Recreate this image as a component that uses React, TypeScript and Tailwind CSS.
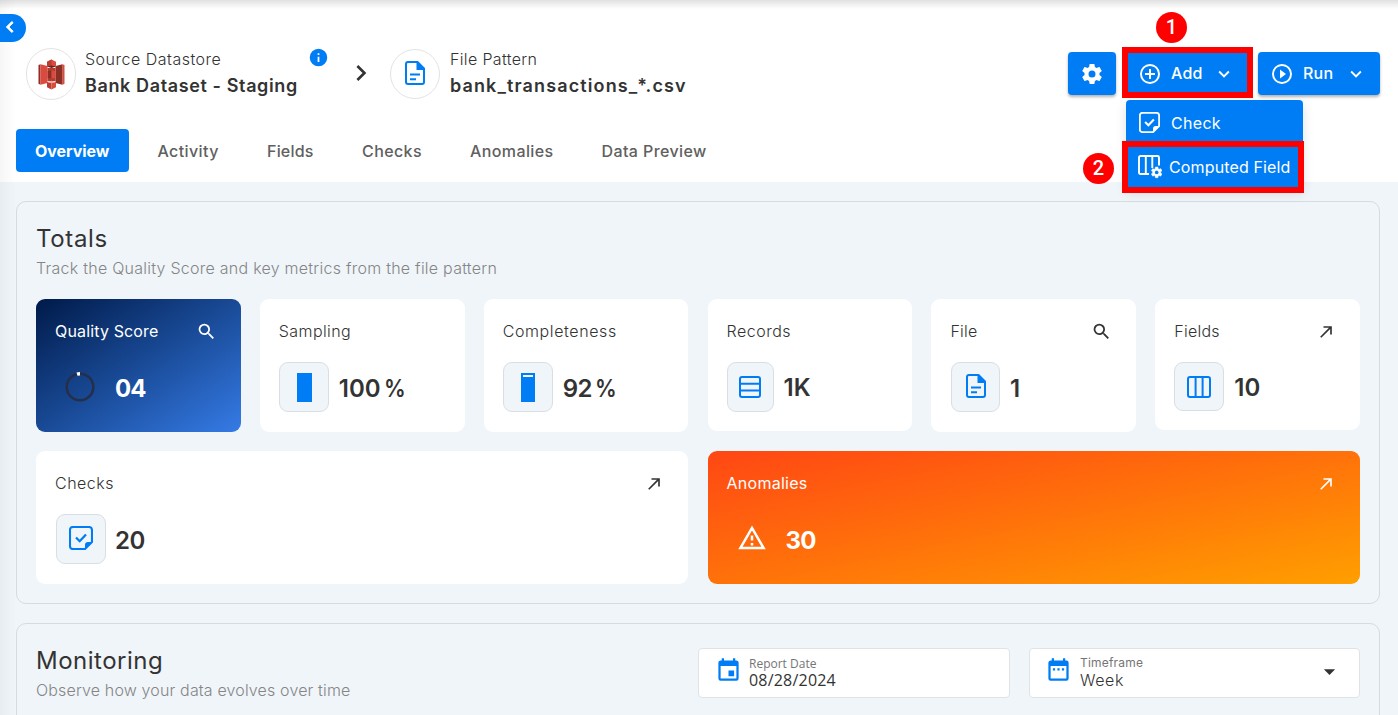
import React from "react";

const paths = {
  search:
    "M9.5,3A6.5,6.5 0 0,1 16,9.5C16,11.11 15.41,12.59 14.44,13.73L14.71,14H15.5L20.5,19L19,20.5L14,15.5V14.71L13.73,14.44C12.59,15.41 11.11,16 9.5,16A6.5,6.5 0 0,1 3,9.5A6.5,6.5 0 0,1 9.5,3M9.5,5C7,5 5,7 5,9.5C5,12 7,14 9.5,14C12,14 14,12 14,9.5C14,7 12,5 9.5,5Z",
  arrow: "M5,17.59L15.59,7H9V5H19V15H17V8.41L6.41,19L5,17.59Z",
  cog: "M12,15.5A3.5,3.5 0 0,1 8.5,12A3.5,3.5 0 0,1 12,8.5A3.5,3.5 0 0,1 15.5,12A3.5,3.5 0 0,1 12,15.5M19.43,12.97C19.47,12.65 19.5,12.33 19.5,12C19.5,11.67 19.47,11.34 19.43,11L21.54,9.37C21.73,9.22 21.78,8.95 21.66,8.73L19.66,5.27C19.54,5.05 19.27,4.96 19.05,5.05L16.56,6.05C16.04,5.66 15.5,5.32 14.87,5.07L14.5,2.42C14.46,2.18 14.25,2 14,2H10C9.75,2 9.54,2.18 9.5,2.42L9.13,5.07C8.5,5.32 7.96,5.66 7.44,6.05L4.95,5.05C4.73,4.96 4.46,5.05 4.34,5.27L2.34,8.73C2.21,8.95 2.27,9.22 2.46,9.37L4.57,11C4.53,11.34 4.5,11.67 4.5,12C4.5,12.33 4.53,12.65 4.57,12.97L2.46,14.63C2.27,14.78 2.21,15.05 2.34,15.27L4.34,18.73C4.46,18.95 4.73,19.03 4.95,18.95L7.44,17.94C7.96,18.34 8.5,18.68 9.13,18.93L9.5,21.58C9.54,21.82 9.75,22 10,22H14C14.25,22 14.46,21.82 14.5,21.58L14.87,18.93C15.5,18.67 16.04,18.34 16.56,17.94L19.05,18.95C19.27,19.03 19.54,18.95 19.66,18.73L21.66,15.27C21.78,15.05 21.73,14.78 21.54,14.63L19.43,12.97Z",
  alert: "M12,2L1,21H23M12,6L19.53,19H4.47M11,10V14H13V10M11,16V18H13V16",
  left: "M15.41,16.58L10.83,12L15.41,7.41L14,6L8,12L14,18L15.41,16.58Z",
  right: "M8.59,16.58L13.17,12L8.59,7.41L10,6L16,12L10,18L8.59,16.58Z",
  down: "M7.41,8.58L12,13.17L16.59,8.58L18,10L12,16L6,10L7.41,8.58Z",
  info: "M13,9H11V7H13M13,17H11V11H13M12,2A10,10 0 1,0 22,12A10,10 0 0,0 12,2Z",
  plus: "M12,20C7.59,20 4,16.41 4,12C4,7.59 7.59,4 12,4C16.41,4 20,7.59 20,12C20,16.41 16.41,20 12,20M12,2A10,10 0 1,0 22,12A10,10 0 0,0 12,2M13,7H11V11H7V13H11V17H13V13H17V11H13V7Z",
  play: "M12,20C7.59,20 4,16.41 4,12C4,7.59 7.59,4 12,4C16.41,4 20,7.59 20,12C20,16.41 16.41,20 12,20M12,2A10,10 0 1,0 22,12A10,10 0 0,0 12,2M10,16.5L16,12L10,7.5V16.5Z",
  calendarDay:
    "M19,19H5V8H19M16,1V3H8V1H6V3H5C3.89,3 3,3.89 3,5V19A2,2 0 0,0 5,21H19A2,2 0 0,0 21,19V5C21,3.89 20.1,3 19,3H18V1M17,12H12V17H17V12Z",
  calendarRange:
    "M9,10H7V12H9V10M13,10H11V12H13V10M17,10H15V12H17V10M19,3H18V1H16V3H8V1H6V3H5C3.89,3 3,3.9 3,5V19A2,2 0 0,0 5,21H19A2,2 0 0,0 21,19V5A2,2 0 0,0 19,3M19,19H5V8H19V19Z",
  caret: "M7,10L12,15L17,10H7Z",
};

function Icon({ name, className }: { name: keyof typeof paths; className: string }) {
  return (
    <svg viewBox="0 0 24 24" className={`shrink-0 fill-current ${className}`}>
      <path fillRule={name === "alert" ? "evenodd" : "nonzero"} d={paths[name]} />
    </svg>
  );
}

function FileIcon({ className }: { className: string }) {
  return (
    <svg viewBox="0 0 20 24" className={`shrink-0 ${className}`} fill="none">
      <path d="M12.5 1H3Q1 1 1 3V21Q1 23 3 23H17Q19 23 19 21V7.5Z" stroke="currentColor" strokeWidth="2" strokeLinejoin="round" />
      <path d="M11.5 1H13L19 7.2V9H11.5Z" fill="currentColor" />
      <path d="M5 13.5H15M5 18.2H11" stroke="currentColor" strokeWidth="2" />
    </svg>
  );
}

function CheckIcon({ className }: { className: string }) {
  return (
    <svg viewBox="0 0 24 24" className={`shrink-0 ${className}`} fill="none">
      <path d="M16 23H4Q1 23 1 20V4Q1 1 4 1H20Q23 1 23 4V16Z" stroke="currentColor" strokeWidth="2.1" strokeLinejoin="round" />
      <path d="M16 23V19Q16 16 19 16H23Z" fill="currentColor" />
      <path d="M7 11.5L10.7 15.2L17 8.5" stroke="currentColor" strokeWidth="2.3" />
    </svg>
  );
}

function RowsIcon() {
  return (
    <svg viewBox="0 0 22 22" className="size-[22px]" fill="none" stroke="#007df5" strokeWidth="2">
      <rect x="1" y="1" width="20" height="20" rx="2" />
      <path d="M1 7.8H21M1 14.4H21" />
    </svg>
  );
}

function ColumnsIcon() {
  return (
    <svg viewBox="0 0 24 22" className="-ml-px h-[22px] w-6" fill="none" stroke="#007df5" strokeWidth="2">
      <rect x="1" y="1" width="22" height="20" rx="2" />
      <path d="M8.6 1V21M15.6 1V21" />
    </svg>
  );
}

function ComputedIcon() {
  return (
    <svg viewBox="0 0 24 24" className="h-6 w-6 shrink-0" fill="none" stroke="white" strokeWidth="1.9">
      <path d="M11 19H2.5Q1 19 1 17.5V2.5Q1 1 2.5 1H19.5Q21 1 21 2.5V10.5M7.8 1V19M14.3 1V13" />
      <g transform="translate(12.2 10.9) scale(.54)">
        <path d={paths.cog} fill="white" stroke="white" strokeWidth=".8" />
        <circle cx="12" cy="12" r="3" fill="#007df5" stroke="none" />
      </g>
    </svg>
  );
}

function StorageLogo() {
  return (
    <svg viewBox="0 0 27 31" className="h-[31px] w-[27px]">
      <path d="M0.5 6L2.5 5.2V25.8L0.5 24.8Z" fill="#8c2f25" />
      <path d="M2.5 5.2L9.5 7V24L2.5 25.8Z" fill="#dc4a3d" />
      <path d="M26.5 6L24.5 5.2V25.8L26.5 24.8Z" fill="#dc4a3d" />
      <path d="M24.5 5.2L17.5 7V24L24.5 25.8Z" fill="#8c2f25" />
      <path d="M9.5 9H17.5V22H9.5Z" fill="#b33b30" />
      <path d="M13.5 0.5L9 2.8V7.6L13.5 8.3L18 7.6V2.8Z" fill="#dc4a3d" />
      <path d="M13.5 0.5L9 2.8V7.6L13.5 6.6Z" fill="#b93e32" />
      <path d="M9 7.6L13.5 6.6L18 7.6L13.5 9Z" fill="#6b2019" />
      <path d="M9.8 12L13.5 11.5V19.5L9.8 19Z" fill="#8c2f25" />
      <path d="M17.2 12L13.5 11.5V19.5L17.2 19Z" fill="#dc4a3d" />
      <path d="M9 23L13.5 21.8L18 23L13.5 24.2Z" fill="#eda79f" />
      <path d="M9 23L13.5 24.2V30.5L9 28.2Z" fill="#b93e32" />
      <path d="M18 23L13.5 24.2V30.5L18 28.2Z" fill="#dc4a3d" />
    </svg>
  );
}

function Tile({ className, children }: { className: string; children: React.ReactNode }) {
  return (
    <div className={`flex shrink-0 items-center justify-center rounded-[9px] border border-[#d9dee4] bg-[#f0f5fa] text-[#007df5] ${className}`}>
      {children}
    </div>
  );
}

type CardProps = {
  title: string;
  titleClass?: string;
  className: string;
  action?: "search" | "arrow";
  children: React.ReactNode;
};

function Card({ title, titleClass = "", className, action, children }: CardProps) {
  return (
    <div className={`rounded-[9px] px-[19px] pt-[19px] ${className}`}>
      <div className="flex h-[26px] items-center justify-between">
        <span className={`whitespace-nowrap text-[16px] ${titleClass}`}>{title}</span>
        {action === "search" && <Icon name="search" className="mr-[5px] mt-px size-[21px]" />}
        {action === "arrow" && <Icon name="arrow" className="mr-[5px] mt-[2px] size-[20px]" />}
      </div>
      <div className="mt-[18px] flex h-[50px] items-start">{children}</div>
    </div>
  );
}

export default function App() {
  return (
    <div className="relative h-[715px] w-[1398px] overflow-hidden bg-[#f0f5fa] font-['Inter',sans-serif] text-[#333333]">
      <header className="h-[182px] bg-white pt-[48px]">
        <div className="flex h-[52px] items-start pl-[26px] pr-[18px]">
          <div className="flex h-[52px] w-[50px] shrink-0 items-center justify-center rounded-full border border-[#e3e3e3]">
            <StorageLogo />
          </div>
          <div className="ml-[9px] w-[225px] shrink-0 whitespace-nowrap">
            <div className="h-[22px] text-[16px] leading-[22px] font-light tracking-[0.5px]">Source Datastore</div>
            <div className="mt-[3px] text-[18px] leading-[25px] font-semibold tracking-[0.62px]">Bank Dataset - Staging</div>
          </div>
          <Icon name="info" className="-ml-[2px] mt-[-1px] size-[21px] text-[#007df5]" />
          <Icon name="right" className="ml-[16px] mt-[9px] size-[32px]" />
          <div className="ml-[13px] mt-px flex size-[50px] shrink-0 items-center justify-center rounded-full border border-[#e3e3e3] text-[#007df5]">
            <FileIcon className="-mt-[3px] h-6 w-5" />
          </div>
          <div className="ml-[10px] w-[240px] shrink-0 whitespace-nowrap">
            <div className="h-[22px] text-[16px] leading-[22px] font-light tracking-[0.35px]">File Pattern</div>
            <div className="mt-[3px] text-[18px] leading-[25px] font-semibold tracking-[1.12px]">bank_transactions_*.csv</div>
          </div>
          <div className="ml-auto mt-[4px] flex gap-[10px] text-[16px] font-medium text-white">
            <button className="flex h-[43px] w-12 items-center justify-center rounded-[4px] bg-[#007df5] shadow-[0_2px_3px_rgba(0,0,0,.3)]">
              <Icon name="cog" className="size-[24px]" />
            </button>
            <button className="flex h-[43px] w-[122px] items-center rounded-[4px] bg-[#007df5] pl-[12px]">
              <Icon name="plus" className="size-[24px]" />
              <span className="-mt-px ml-[9px] w-[42px] text-left tracking-[0.2px]">Add</span>
              <Icon name="down" className="size-[22px]" />
            </button>
            <button className="flex h-[43px] w-[122px] items-center rounded-[4px] bg-[#007df5] pl-[12px] shadow-[0_2px_3px_rgba(0,0,0,.3)]">
              <Icon name="play" className="size-[24px]" />
              <span className="-mt-px ml-[9px] w-[42px] text-left tracking-[0.2px]">Run</span>
              <Icon name="down" className="size-[22px]" />
            </button>
          </div>
        </div>
        <nav className="mt-[29px] flex h-[43px] items-center whitespace-nowrap pl-4 text-[16px] font-medium tracking-[0.4px] text-[#606060]">
          <div className="flex h-[43px] w-[113px] items-center rounded-[4px] bg-[#007df5] pl-[19px] font-bold tracking-[-0.05px] text-white">Overview</div>
          <span className="ml-[28.5px] w-[109.5px]">Activity</span>
          <span className="w-[95px] tracking-[0.2px]">Fields</span>
          <span className="w-[108px]">Checks</span>
          <span className="w-[131.5px]">Anomalies</span>
          <span>Data Preview</span>
        </nav>
      </header>

      <main className="px-4 pr-[18px] pt-[19px]">
        <section className="h-[403px] rounded-[10px] border border-[#d5dbe1] px-[19px] pt-[23px]">
          <h2 className="h-[28px] text-[24px] leading-[28px] font-normal tracking-[0.65px]">Totals</h2>
          <p className="mt-[4px] h-[22px] text-[16px] leading-[22px] font-light tracking-[0.25px] text-[#858585]">Track the Quality Score and key metrics from the file pattern</p>
          <div className="mt-[20px] grid grid-cols-6 items-start gap-x-[19.2px] gap-y-[19px]">
            <Card title="Quality Score" titleClass="tracking-[0.15px]" action="search" className="h-[133px] bg-linear-[to_bottom_right,#001a49_0%,#194a96_50%,#357be6_100%] text-white">
              <svg viewBox="0 0 34 34" className="ml-[8px] mt-[8px] size-[34px]" fill="none" strokeWidth="2.6">
                <circle cx="17" cy="17" r="13.3" stroke="#252f49" />
                <path d="M14 4.1Q15.3 3.7 17 3.7" stroke="white" strokeWidth="3.4" />
              </svg>
              <span className="ml-[18px] mt-[9px] text-[24px] leading-[36px] font-bold tracking-[-0.9px]">04</span>
            </Card>
            <Card title="Sampling" titleClass="font-light tracking-[0.4px]" className="h-[133px] bg-white">
              <Tile className="size-[50px]">
                <div className="ml-px h-[29px] w-[15px] bg-[#007df5]" />
              </Tile>
              <span className="ml-[10px] mt-[9px] text-[24px] leading-[36px] font-semibold">100<span className="ml-[3px] inline-block origin-left scale-x-90">%</span></span>
            </Card>
            <Card title="Completeness" titleClass="font-light tracking-[0.6px]" className="h-[133px] bg-white">
              <Tile className="size-[50px]">
                <div className="h-[29px] w-[14px] bg-[#007df5] px-[2px] pt-[2px]">
                  <div className="h-[2px] bg-[#f0f5fa]" />
                </div>
              </Tile>
              <span className="ml-[10px] mt-[9px] text-[24px] leading-[36px] font-semibold tracking-[-0.6px]">92<span className="ml-[3px] inline-block origin-left scale-x-90">%</span></span>
            </Card>
            <Card title="Records" titleClass="font-light tracking-[0.5px]" className="h-[132px] bg-white">
              <Tile className="h-[50px] w-[47px]">
                <RowsIcon />
              </Tile>
              <span className="ml-[10px] mt-[8px] text-[24px] leading-[36px] font-semibold">1K</span>
            </Card>
            <Card title="File" titleClass="font-light tracking-[0.2px]" action="search" className="h-[133px] bg-white">
              <Tile className="ml-[0.5px] h-[50px] w-[49px]">
                <FileIcon className="-mt-[3px] ml-px h-6 w-5" />
              </Tile>
              <span className="ml-[10px] mt-[9px] text-[24px] leading-[36px] font-semibold">1</span>
            </Card>
            <Card title="Fields" titleClass="font-light tracking-[0.25px]" action="arrow" className="h-[131px] bg-white">
              <Tile className="h-[49px] w-[50px]">
                <ColumnsIcon />
              </Tile>
              <span className="ml-[10px] mt-[8px] text-[24px] leading-[36px] font-semibold">10</span>
            </Card>
            <Card title="Checks" titleClass="font-light tracking-[0.5px]" action="arrow" className="col-span-3 h-[133px] bg-white">
              <Tile className="ml-px size-[50px]">
                <CheckIcon className="-mt-[2px] h-6 w-6" />
              </Tile>
              <span className="ml-[9px] mt-[9px] text-[24px] leading-[36px] font-semibold tracking-[-0.4px]">20</span>
            </Card>
            <Card title="Anomalies" titleClass="tracking-[0.25px]" action="arrow" className="col-span-3 h-[133px] bg-linear-[to_bottom_right,#ff4714_0%,#ff720a_50%,#ff9f00_100%] text-white">
              <Icon name="alert" className="ml-[10px] mt-[9px] size-[30px]" />
              <span className="ml-[19px] mt-[9px] text-[24px] leading-[36px] font-bold tracking-[-0.8px]">30</span>
            </Card>
          </div>
        </section>

        <section className="mt-[19px] flex h-[200px] items-start rounded-[10px] border border-[#d5dbe1] pl-[19px] pr-[19px]">
          <div className="w-[662px] pt-[23px]">
            <h2 className="h-[28px] text-[24px] leading-[28px] font-normal tracking-[0.5px]">Monitoring</h2>
            <p className="mt-[4px] h-[22px] text-[16px] leading-[22px] font-light tracking-[0.15px] text-[#858585]">Observe how your data evolves over time</p>
          </div>
          <div className="mt-[24px] flex h-[50px] w-[312px] rounded-[4px] border border-[#e0e3e6] bg-white pl-[16px]">
            <Icon name="calendarDay" className="mt-[8px] size-[27px] text-[#007df5]" />
            <div className="ml-[7px] whitespace-nowrap font-['Open_Sans',sans-serif]">
              <div className="mt-[8px] text-[12px] leading-[14px] text-[#757575]">Report Date</div>
              <div className="text-[16px] leading-[19px] tracking-[0.2px]">08/28/2024</div>
            </div>
          </div>
          <div className="ml-[19px] mt-[24px] flex h-[50px] w-[331px] rounded-[4px] border border-[#e0e3e6] bg-white pl-[15px] pr-[16px]">
            <Icon name="calendarRange" className="mt-[8px] size-[27px] text-[#007df5]" />
            <div className="ml-[8px] whitespace-nowrap font-light">
              <div className="mt-[7px] text-[12px] leading-[14px] font-normal tracking-[0.2px] text-[#757575]">Timeframe</div>
              <div className="mt-px text-[16px] leading-[19px] tracking-[0.6px]">Week</div>
            </div>
            <Icon name="caret" className="ml-auto mt-[9px] size-[27px]" />
          </div>
        </section>
      </main>

      <div className="pointer-events-none absolute inset-x-0 top-0 h-[9px] bg-linear-to-b from-black/12 to-transparent" />
      <div className="pointer-events-none absolute inset-y-0 left-0 w-4 bg-linear-to-r from-black/[0.035] to-transparent" />
      <div className="absolute left-0 top-[14px] flex h-[28px] w-[26px] items-center rounded-r-full bg-[#007df5] text-white">
        <Icon name="left" className="-ml-[1px] -mt-[2px] size-[22px] stroke-current" />
      </div>

      <div className="absolute left-[1126px] top-[100px] h-[89px] w-[177px] rounded-t-[4px] bg-[#007df5] text-[16px] font-normal text-white shadow-[0_4px_12px_rgba(0,0,0,.12)]">
        <div className="flex h-[45px] items-center pl-[13px]">
          <CheckIcon className="-mt-px h-[21px] w-[21px]" />
          <span className="ml-[11px] tracking-[0.3px]">Check</span>
        </div>
        <div className="flex h-[44px] items-center whitespace-nowrap pl-[12px]">
          <ComputedIcon />
          <span className="ml-[7px] tracking-[0.14px]">Computed Field</span>
        </div>
      </div>
      <div className="absolute left-[1122px] top-[47px] h-[51px] w-[131px] border-[6px] border-[#ff0000]" />
      <div className="absolute left-[1122px] top-[141px] h-[52px] w-[182px] border-[6px] border-[#ff0000]" />
      <div className="absolute left-[1156px] top-[12px] flex size-[31px] items-center justify-center rounded-full bg-[#ff0000] pb-[2px] font-['Roboto',sans-serif] text-[20px] leading-none font-medium text-white">1</div>
      <div className="absolute left-[1083px] top-[153px] flex size-[31px] items-center justify-center rounded-full bg-[#ff0000] pb-[2px] font-['Roboto',sans-serif] text-[20px] leading-none font-medium text-white">2</div>
    </div>
  );
}
